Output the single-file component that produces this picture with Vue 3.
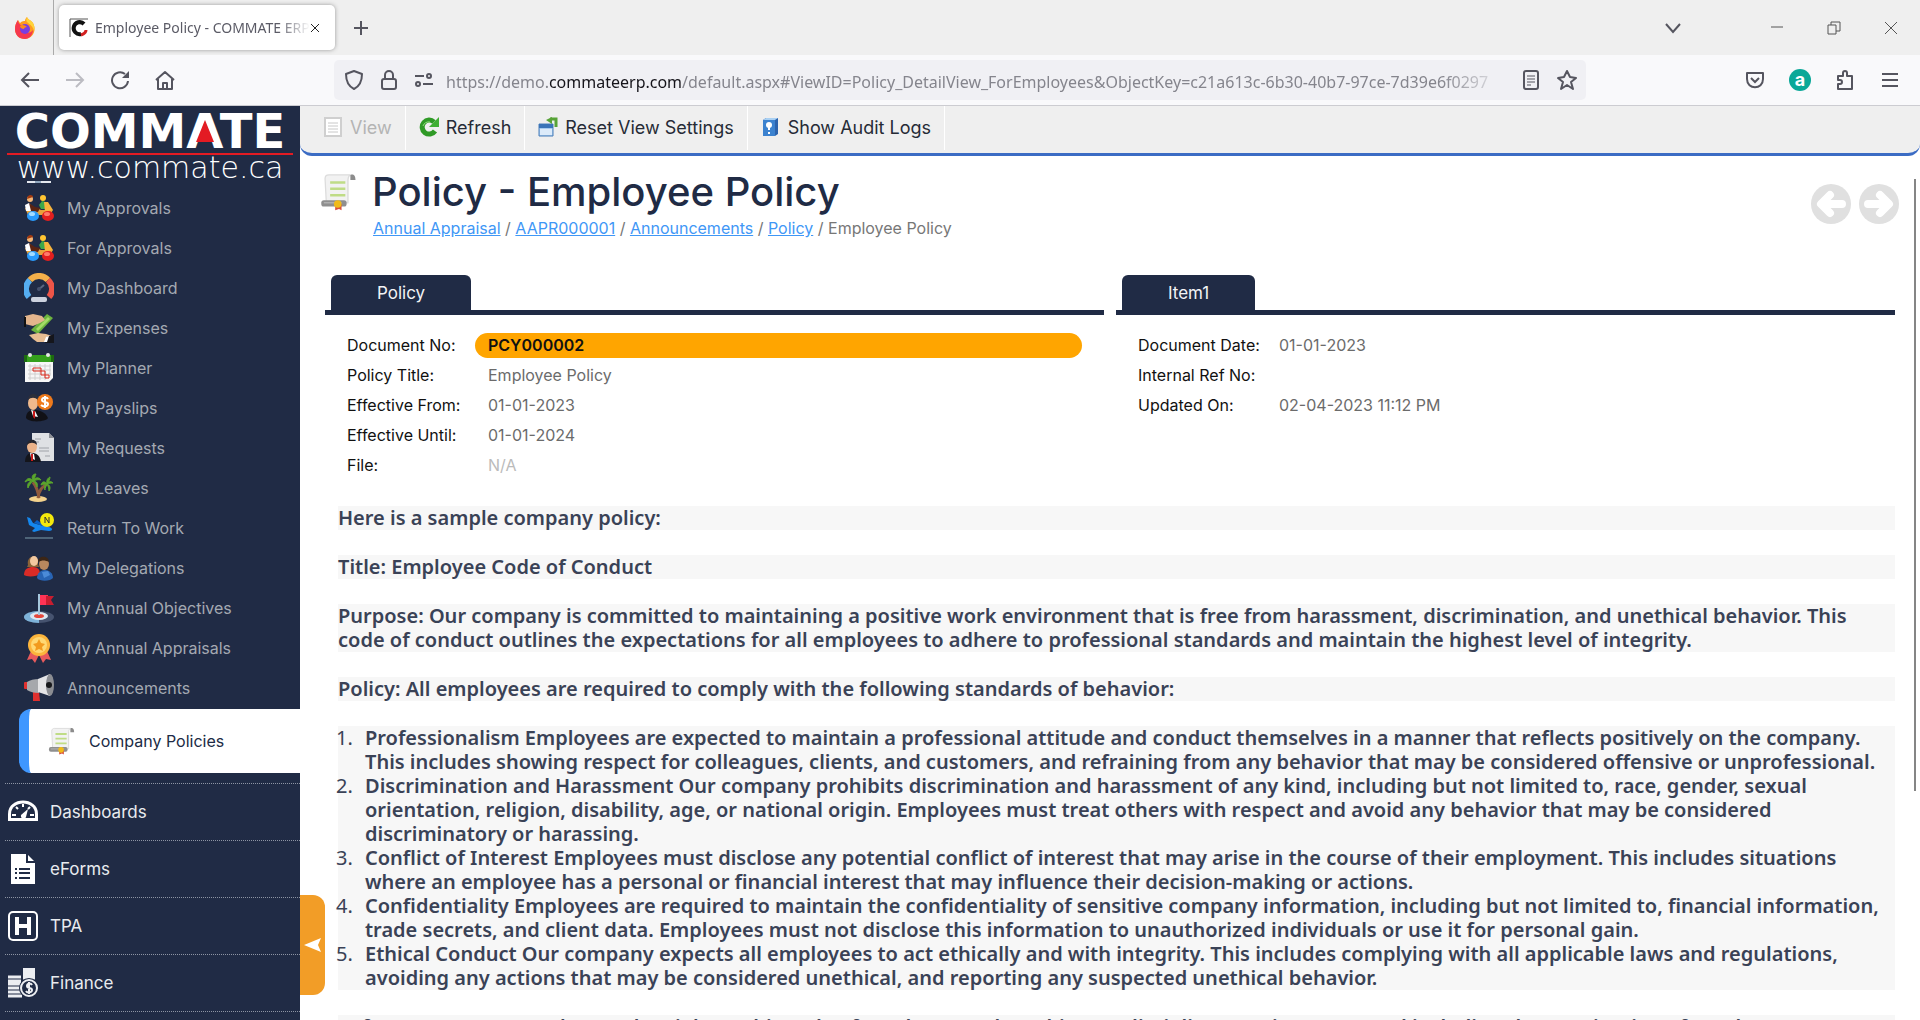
<script setup>
const approvals = `
  <path d="M1 15h12l4 2h12l-3 5H4z" fill="#e9a23a"/>
  <path d="M1 12l4-2 5 5-1 3H2z" fill="#fff"/><path d="M5 10l6 4 5 1-2 4-7-1z" fill="#5a2412"/>
  <circle cx="6" cy="6" r="3" fill="#f5b877"/><path d="M3 6c0-5 6-5 6-2z" fill="#a33a10"/>
  <circle cx="19" cy="5" r="3" fill="#ffc531"/><path d="M15 12l3-4 4 1 3 7h-8z" fill="#3da84a"/><path d="M20 9h4l5 8-8 2z" fill="#f7b43c"/>
  <ellipse cx="9" cy="23" rx="6" ry="5" fill="#2a9bfb"/><ellipse cx="8" cy="21" rx="3" ry="2" fill="#a5dcff"/>
  <ellipse cx="24" cy="23" rx="6" ry="5" fill="#e21f1f"/><ellipse cx="23" cy="21" rx="3" ry="2" fill="#ff7b6b"/>`

const scroll = `
  <path d="M6 2h17v22H6z" fill="#f4f4f4"/><path d="M4 5c0-2 1-3 3-3h17c-2 1-2 3-2 5v17H5z" fill="#f2f2f2" stroke="#dcdcdc"/>
  <path d="M24 2c2-1 4 0 4 4h-4z" fill="#8c8c8c"/>
  <path d="M8 8h12M8 13h12M8 18h12" stroke="#bfdc86" stroke-width="2"/>
  <rect x="1" y="22" width="20" height="5" rx="2" fill="#8f8f8f"/><path d="M3 24h14" stroke="#b5b5b5"/>
  <path d="M12 25h5v5l-2-1-3 1z" fill="#d8503b"/><circle cx="14" cy="25" r="3" fill="#f0bb19"/>`

const menu = [
  { label: 'My Approvals', art: approvals },
  { label: 'For Approvals', art: approvals },
  { label: 'My Dashboard', art: `
    <path d="M5 24A12 12 0 0 1 6 7" fill="none" stroke="#55aef2" stroke-width="6"/>
    <path d="M6 7a12 12 0 0 1 18 0" fill="none" stroke="#f4b04a" stroke-width="6"/>
    <path d="M24 7a12 12 0 0 1 1 17" fill="none" stroke="#ee5548" stroke-width="6"/>
    <path d="M14 17l6-5" stroke="#5b6781" stroke-width="2"/><circle cx="15" cy="16" r="2" fill="#46526d"/>
    <rect x="7" y="24" width="16" height="5" rx="2" fill="#ccd2de"/>` },
  { label: 'My Expenses', art: `
    <path d="M7 17L23 1l6 4-15 16z" fill="#6cb33f"/><path d="M12 16L24 4l2 2-12 12z" fill="#a3dc66"/>
    <path d="M1 3l8-2 9 2 3 4-5 3-7 3-8-2z" fill="#e3b58d"/><path d="M0 4h2v10H0z" fill="#111"/>
    <path d="M5 22l9-2 8 1 6 2-4 6H13l-4-3z" fill="#e8bd92"/><path d="M23 24l7-3v9h-9z" fill="#15161c"/><path d="M22 24l3-1-2 6h-3z" fill="#fff"/>` },
  { label: 'My Planner', art: `
    <path d="M1 3h28v22l-4 4H1z" fill="#f7f7f7"/><path d="M0 2h30v7H0z" fill="#35a01c"/><path d="M0 2h3v7H0zM27 2h3v7h-3z" fill="#1d6a10"/>
    <rect x="4" width="4" height="4" rx="2" fill="#e8e8e8"/><rect x="22" width="4" height="4" rx="2" fill="#e8e8e8"/>
    <path d="M4 13h23M4 17h23M4 21h23M4 25h19M6 11v16M11 11v16M16 11v16M21 11v16M26 11v12" stroke="#cfcfcf"/>
    <path d="M9 15h8v3H9zM17 18h4v4h-4zM21 22h4v3h-4z" fill="none" stroke="#dc2a1c"/>` },
  { label: 'My Payslips', art: `
    <path d="M2 25c0-6 4-8 8-8s11 1 14 8c-2 4-19 5-22 0z" fill="#111116"/><path d="M7 17l4 1 3 6-5-1z" fill="#f3f3f3"/><path d="M9 18h2v8l-2-2z" fill="#c91919"/>
    <ellipse cx="9" cy="10" rx="5" ry="7" fill="#efb98c"/><path d="M4 7c0-8 11-8 10 0-3-3-7-3-10 0z" fill="#2c2f3a"/>
    <circle cx="21" cy="9" r="8" fill="#ee7a1c"/><path d="M24 6c-1-2-6-2-6 1s6 1 6 4-5 3-7 1M21 3v12" fill="none" stroke="#fff" stroke-width="2"/>` },
  { label: 'My Requests', art: `
    <path d="M8 0h17l5 5v23H8z" fill="#dfe1e4"/><path d="M25 0l5 5h-5z" fill="#8d9096"/>
    <path d="M11 6h6M11 9h4M15 15h10M15 18h10M21 23h5" stroke="#9fa2a8"/>
    <path d="M1 29c0-6 3-9 7-9s8 2 9 9z" fill="#14151b"/><path d="M6 20l4 1 1 6-4-2z" fill="#fff"/><path d="M7 21h2v7H7z" fill="#c91919"/>
    <ellipse cx="8" cy="14" rx="5" ry="6" fill="#ecb389"/><path d="M3 12c0-7 10-7 10 0-3-3-7-3-10 0z" fill="#25262e"/>` },
  { label: 'My Leaves', art: `
    <ellipse cx="14" cy="26" rx="9" ry="3" fill="#f4d38d"/>
    <path d="M15 25C14 18 12 13 9 9M14 25c1-8 4-11 9-14" fill="none" stroke="#8f5a3c" stroke-width="3"/>
    <path d="M9 8C6 4 3 5 1 9c3-2 5-2 8-1zM9 8C4 8 3 12 4 15c1-3 3-5 5-7zM9 8C7 3 9 1 12 1c-1 2-1 4-3 7zM9 8c2-4 6-4 8-1-3-1-5 0-8 1zM9 8c4 0 5 3 4 6-1-3-2-4-4-6z" fill="#59a52c" stroke="#59a52c"/>
    <path d="M23 11c-2-3-5-3-6 1 2-1 4-1 6-1zM23 11c-3 1-3 4-2 6 0-2 1-4 2-6zM23 11c-1-4 1-6 3-7 0 2-1 4-3 7zM23 11c1-3 4-3 6-1-2 0-4 0-6 1zM23 11c3 1 4 4 2 7 0-3-1-5-2-7z" fill="#59a52c" stroke="#59a52c"/>` },
  { label: 'Return To Work', art: `
    <path d="M3 4l3 1 3 5 7 2 9 2c4 1 4 4 0 4l-8-1-7 2-2-1 3-3-6-3z" fill="#1487ee"/><path d="M10 10l3-3 9 7z" fill="#0a60c4"/>
    <circle cx="23" cy="7" r="7" fill="#f4e90c"/><path d="M21 10V4l4 6V4" fill="none" stroke="#333" stroke-width="1"/>
    <path d="M1 25h28" stroke="#7d9eac" stroke-width="1"/>` },
  { label: 'My Delegations', art: `
    <path d="M4 12C2 2 15 0 14 11l1 3H3z" fill="#8a6338"/><ellipse cx="10" cy="8" rx="4" ry="5" fill="#f2c8a0"/>
    <path d="M0 22c0-6 4-8 9-8s7 3 7 7c-3 3-14 3-16 1z" fill="#d92b27"/>
    <ellipse cx="20" cy="11" rx="5" ry="6" fill="#b8875e"/><path d="M14 9c0-7 11-7 11 0-4-2-7-2-11 0z" fill="#3c2616"/>
    <path d="M13 25c0-5 4-8 8-8s8 3 8 8c-2 3-13 4-16 0z" fill="#2864b4"/><path d="M18 19l6-1 2 4-6 3z" fill="#4b8bd8"/>` },
  { label: 'My Annual Objectives', art: `
    <ellipse cx="15" cy="24" rx="15" ry="6" fill="#46536f"/><path d="M15 18a15 6 0 0 0 0 12z" fill="#7db2d8"/>
    <ellipse cx="15" cy="23" rx="9" ry="4" fill="#dce8f2"/><ellipse cx="15" cy="23" rx="5" ry="2" fill="#e5483c"/>
    <path d="M15 1v21" stroke="#a5c7dc" stroke-width="2"/><path d="M16 2h8v10h-8z" fill="#ff3355"/><path d="M22 3h8l-3 4 3 5h-8z" fill="#c81d2f"/>` },
  { label: 'My Annual Appraisals', art: `
    <path d="M7 18L3 27l5-1 3 4 4-8 4 8 3-4 5 1-4-9z" fill="#e85a5c"/>
    <circle cx="15" cy="12" r="11" fill="#fcb53c"/><circle cx="15" cy="12" r="8" fill="#ffd873"/>
    <path d="M15 6l2 4 4 1-3 3 1 4-4-2-4 2 1-4-3-3 4-1z" fill="#f29a1e"/>` },
  { label: 'Announcements', art: `
    <path d="M9 19h6l1 9H9z" fill="#e0302f"/><rect y="9" width="5" height="7" rx="1" fill="#e0302f"/>
    <path d="M3 9c3-2 7-3 12-3v14c-5 0-9-1-12-3z" fill="#a6a8ac"/><path d="M14 6L26 1v22l-12-4z" fill="#e4e4e6"/>
    <ellipse cx="26" cy="12" rx="4" ry="11" fill="#8b8d92"/><circle cx="25" cy="12" r="3" fill="#17181b"/>` },
]

const modules = [
  { label: 'Dashboards', art: `
    <path d="M0 24V17C0-1 30-1 30 17v7z" fill="#fff"/><path d="M3 21v-4C3 3 27 3 27 17v4z" fill="#202b45"/>
    <path d="M15 7v3M8 10l2 2M22 10l-2 2M4 18h4M22 18h4" stroke="#fff" stroke-width="2"/><path d="M13 18l7-6-2 8c-1 3-6 2-5-2z" fill="#fff"/>` },
  { label: 'eForms', art: `
    <path d="M3 0h15v9h9v21H3z" fill="#fff"/><path d="M20 1l6 6h-6z" fill="#fff"/>
    <path d="M7 15h2M7 19h2M7 24h2M11 15h11M11 19h11M11 24h11" stroke="#202b45" stroke-width="2"/>` },
  { label: 'TPA', art: `
    <rect x="1" y="1" width="28" height="28" rx="4" fill="none" stroke="#fff" stroke-width="2"/>
    <path d="M9 6v18M21 6v18M9 15h12" stroke="#fff" stroke-width="4"/>` },
  { label: 'Finance', art: `
    <path d="M15 1h12M15 4h12M15 7h12M15 10h12M0 9h13M0 13h13M0 16h13M0 20h13M0 24h13M0 28h14" stroke="#eceef2" stroke-width="3"/>
    <circle cx="21" cy="20" r="10" fill="#202b45"/><circle cx="21" cy="20" r="8" fill="none" stroke="#eceef2" stroke-width="2"/>
    <path d="M24 17c-1-2-5-2-5 1s5 1 5 4-5 3-6 1M21 14v12" fill="none" stroke="#eceef2" stroke-width="2"/>` },
]

const tools = [
  { label: 'View', disabled: true, art: `<path d="M2 1h16v18H2z" fill="#fff" stroke="#cfcfcf" stroke-width="2"/><path d="M5 6h10M5 9h10M5 12h10M5 15h10" stroke="#c8c8c8"/>` },
  { label: 'Refresh', art: `<path d="M16 14a7 7 0 1 1-1-9" fill="none" stroke="#2f9a26" stroke-width="5"/><path d="M20 0v10H10z" fill="#3fae33"/><path d="M4 9a6 6 0 0 1 7-4" fill="none" stroke="#8edb7c" stroke-width="1"/>` },
  { label: 'Reset View Settings', art: `<path d="M1 7h14v12H1z" fill="#a8cbee" stroke="#4a7fb9"/><path d="M1 7h14v4H1z" fill="#3a74b8"/><path d="M2 12h12v6H2z" fill="#dcebfa"/><path d="M12 2h6v8" fill="none" stroke="#57a337" stroke-width="3"/><path d="M14 0v7L8 3z" fill="#57a337"/>` },
  { label: 'Show Audit Logs', art: `<path d="M2 3l3-2h12v16l-3 2H2z" fill="#2c63ad"/><path d="M2 3h12v16H2z" fill="#3c82cf"/><path d="M5 1h12l-3 2H2z" fill="#a9d0f3"/><circle cx="8" cy="8" r="3" fill="#fff"/><path d="M7 10h2v3H7zM7 15h2v2H7z" fill="#fff"/>` },
]

const crumbs = ['Annual Appraisal', 'AAPR000001', 'Announcements', 'Policy']

const groups = [
  { title: 'Policy', rows: [
    { label: 'Document No:', value: 'PCY000002', kind: 'key' },
    { label: 'Policy Title:', value: 'Employee Policy' },
    { label: 'Effective From:', value: '01-01-2023' },
    { label: 'Effective Until:', value: '01-01-2024' },
    { label: 'File:', value: 'N/A', kind: 'empty' },
  ] },
  { title: 'Item1', rows: [
    { label: 'Document Date:', value: '01-01-2023' },
    { label: 'Internal Ref No:', value: '' },
    { label: 'Updated On:', value: '02-04-2023 11:12 PM' },
  ] },
]

const intro = [
  'Here is a sample company policy:',
  'Title: Employee Code of Conduct',
  'Purpose: Our company is committed to maintaining a positive work environment that is free from harassment, discrimination, and unethical behavior. This code of conduct outlines the expectations for all employees to adhere to professional standards and maintain the highest level of integrity.',
  'Policy: All employees are required to comply with the following standards of behavior:',
]

const standards = [
  'Professionalism Employees are expected to maintain a professional attitude and conduct themselves in a manner that reflects positively on the company. This includes showing respect for colleagues, clients, and customers, and refraining from any behavior that may be considered offensive or unprofessional.',
  'Discrimination and Harassment Our company prohibits discrimination and harassment of any kind, including but not limited to, race, gender, sexual orientation, religion, disability, age, or national origin. Employees must treat others with respect and avoid any behavior that may be considered discriminatory or harassing.',
  'Conflict of Interest Employees must disclose any potential conflict of interest that may arise in the course of their employment. This includes situations where an employee has a personal or financial interest that may influence their decision-making or actions.',
  'Confidentiality Employees are required to maintain the confidentiality of sensitive company information, including but not limited to, financial information, trade secrets, and client data. Employees must not disclose this information to unauthorized individuals or use it for personal gain.',
  'Ethical Conduct Our company expects all employees to act ethically and with integrity. This includes complying with all applicable laws and regulations, avoiding any actions that may be considered unethical, and reporting any suspected unethical behavior.',
]

const closing = 'Enforcement: Any employee who violates this code of conduct may be subject to disciplinary action, up to and including the termination of employment.'
</script>

<template>
  <div class="browser">
    <header class="tabstrip">
      <button class="firefox" aria-label="Firefox View">
        <svg width="22" height="22" viewBox="0 0 22 22">
          <path d="M1 12C1 7 3 5 4 3l2 3c2-2 4-2 5-2 0-2 1-3 2-4 1 3 4 3 6 6 4 7 0 16-8 16C5 22 1 18 1 12z" fill="#ff9a1f" />
          <path d="M1 12c0-4 1-6 3-9 0 4 3 4 4 7 1 8 8 7 11 3 0 5-4 9-8 9C5 22 1 18 1 12z" fill="#f5384f" />
          <circle cx="11" cy="12" r="5" fill="#7a3de0" />
          <path d="M6 9c2-2 5-1 7 1-2 0-3 1-3 2-2 0-4-1-4-3z" fill="#ff8a1a" />
          <path d="M13 0c1 3 4 3 6 6 1 2 2 5 1 8-1-5-4-6-7-9-1-1-1-3 0-5z" fill="#ffd43a" />
        </svg>
      </button>
      <div class="tab">
        <svg width="20" height="20" viewBox="0 0 20 20">
          <path d="M1 19V1h18" fill="none" stroke="#555" />
          <path d="M15 6a6 6 0 1 0-3 10" fill="none" stroke="#111" stroke-width="4" />
          <path d="M12 17c3-1 5-2 5-5" fill="none" stroke="#d32020" stroke-width="3" />
        </svg>
        <span class="tab-title">Employee Policy - COMMATE ERP</span>
        <button aria-label="Close tab">
          <svg width="10" height="10" viewBox="0 0 10 10"><path d="M1 1l8 8M9 1L1 9" stroke="#222" stroke-width="1" /></svg>
        </button>
      </div>
      <button class="new-tab" aria-label="New tab">
        <svg width="16" height="16" viewBox="0 0 16 16"><path d="M8 1v14M1 8h14" stroke="#55555f" stroke-width="2" /></svg>
      </button>
      <div class="window-controls">
        <button aria-label="List all tabs"><svg width="16" height="16" viewBox="0 0 16 16"><path d="M1 4l7 8 7-8" fill="none" stroke="#55555f" stroke-width="2" /></svg></button>
        <button aria-label="Minimize"><svg width="14" height="14" viewBox="0 0 14 14"><path d="M1 6h12" stroke="#555" /></svg></button>
        <button aria-label="Restore"><svg width="14" height="14" viewBox="0 0 14 14"><path d="M1 4h8v9H1zM4 4V1h9v9H9" fill="none" stroke="#555" /></svg></button>
        <button aria-label="Close"><svg width="14" height="14" viewBox="0 0 14 14"><path d="M1 1l12 12M13 1L1 13" stroke="#555" /></svg></button>
      </div>
    </header>

    <nav class="navbar" aria-label="Browser">
      <div class="nav-buttons">
        <button aria-label="Back"><svg width="20" height="20" viewBox="0 0 20 20"><path d="M19 10H2M9 3l-7 7 7 7" fill="none" stroke="#55555f" stroke-width="2" /></svg></button>
        <button aria-label="Forward" disabled><svg width="20" height="20" viewBox="0 0 20 20"><path d="M1 10h17M11 3l7 7-7 7" fill="none" stroke="#bcbcc2" stroke-width="2" /></svg></button>
        <button aria-label="Reload"><svg width="20" height="20" viewBox="0 0 20 20"><path d="M18 11a8 8 0 1 1-3-7" fill="none" stroke="#55555f" stroke-width="2" /><path d="M19 1v7h-7z" fill="#55555f" /></svg></button>
        <button aria-label="Home"><svg width="20" height="20" viewBox="0 0 20 20"><path d="M1 10l9-8 9 8M3 9v10h14V9M8 19v-6h4v6" fill="none" stroke="#55555f" stroke-width="2" stroke-linejoin="round" /></svg></button>
      </div>
      <div class="urlbar">
        <svg width="20" height="22" viewBox="0 0 20 22"><path d="M10 2l8 3c0 7-2 12-8 15C4 17 2 12 2 5z" fill="none" stroke="#55555f" stroke-width="2" stroke-linejoin="round" /></svg>
        <svg width="20" height="22" viewBox="0 0 20 22"><rect x="3" y="10" width="14" height="10" rx="2" fill="none" stroke="#55555f" stroke-width="2" /><path d="M6 10V6a4 4 0 0 1 8 0v4" fill="none" stroke="#55555f" stroke-width="2" /></svg>
        <svg width="20" height="22" viewBox="0 0 20 22"><path d="M1 7h9M9 15h10" stroke="#55555f" stroke-width="2" /><circle cx="15" cy="7" r="2" fill="none" stroke="#55555f" stroke-width="2" /><circle cx="4" cy="15" r="2" fill="none" stroke="#55555f" stroke-width="2" /></svg>
        <div class="url" role="textbox" aria-label="Address">https://demo.<b>commateerp.com</b>/default.aspx#ViewID=Policy_DetailView_ForEmployees&amp;ObjectKey=c21a613c-6b30-40b7-97ce-7d39e6f0297</div>
        <button aria-label="Reader view"><svg width="20" height="20" viewBox="0 0 20 20"><rect x="3" y="1" width="14" height="18" rx="2" fill="none" stroke="#55555f" stroke-width="2" /><path d="M6 6h8M6 9h8M6 12h8M6 15h4" stroke="#55555f" /></svg></button>
        <button aria-label="Bookmark"><svg width="22" height="22" viewBox="0 0 22 22"><path d="M11 2l3 6 6 1-5 4 2 7-6-4-6 4 2-7-5-4 6-1z" fill="none" stroke="#55555f" stroke-width="2" stroke-linejoin="round" /></svg></button>
      </div>
      <div class="nav-extras">
        <button aria-label="Pocket"><svg width="20" height="20" viewBox="0 0 20 20"><path d="M2 3h16v6c0 11-16 11-16 0z" fill="none" stroke="#55555f" stroke-width="2" stroke-linejoin="round" /><path d="M6 8l4 4 4-4" fill="none" stroke="#55555f" stroke-width="2" /></svg></button>
        <button class="addon" aria-label="Add-on">a</button>
        <button aria-label="Extensions"><svg width="20" height="20" viewBox="0 0 20 20"><path d="M3 6h5V3a2 2 0 0 1 4 0v3h5v13H3v-5h2a2 2 0 0 0 0-4H3z" fill="none" stroke="#55555f" stroke-width="2" stroke-linejoin="round" /></svg></button>
        <button aria-label="Menu"><svg width="20" height="20" viewBox="0 0 20 20"><path d="M2 4h16M2 10h16M2 16h16" stroke="#55555f" stroke-width="2" /></svg></button>
      </div>
    </nav>

    <div class="page">
      <aside class="sidebar">
        <div class="brand">
          <div class="brand-name">COMMATE<svg width="18" height="22" viewBox="0 0 18 22"><path d="M9 0l9 22H0z" fill="#e31b23" /></svg></div>
          <div class="brand-site">www.commate.ca</div>
        </div>
        <svg class="peek" width="24" height="8" viewBox="0 0 24 8"><path d="M0 2h24" stroke="#e4e7ee" stroke-width="2" /><path d="M8 2h6" stroke="#8fa6bd" stroke-width="2" /></svg>
        <a v-for="item in menu" :key="item.label" class="menu-item" href="#">
          <svg width="30" height="30" viewBox="0 0 30 30" v-html="item.art" />{{ item.label }}
        </a>
        <a class="menu-item current" href="#" aria-current="page">
          <svg width="28" height="30" viewBox="0 0 30 31" v-html="scroll" />Company Policies
        </a>
        <a v-for="item in modules" :key="item.label" class="module" href="#">
          <svg width="30" height="30" viewBox="0 0 30 30" v-html="item.art" />{{ item.label }}
        </a>
        <div class="module-end"></div>
      </aside>

      <main class="content">
        <button class="collapse" aria-label="Collapse menu">
          <svg width="18" height="16" viewBox="0 0 18 16"><path d="M0 8l17-7-3 7 3 7z" fill="#fff" /></svg>
        </button>
        <div class="toolbar">
          <button v-for="t in tools" :key="t.label" class="tool" :disabled="t.disabled">
            <svg width="20" height="20" viewBox="0 0 20 20" v-html="t.art" />{{ t.label }}
          </button>
        </div>

        <div class="view">
          <div class="heading">
            <svg width="38" height="40" viewBox="0 0 30 31" v-html="scroll" />
            <div class="heading-text">
              <h1>Policy - Employee Policy</h1>
              <div class="crumbs">
                <template v-for="c in crumbs" :key="c"><a href="#">{{ c }}</a> / </template>Employee Policy
              </div>
            </div>
            <div class="record-nav">
              <button aria-label="Previous record" disabled>
                <svg width="40" height="40" viewBox="0 0 40 40"><circle cx="20" cy="20" r="20" fill="#e0e0e0" /><path d="M19 11l-9 9 9 9M11 20h20" fill="none" stroke="#fff" stroke-width="8" stroke-linecap="round" stroke-linejoin="round" /><path d="M11 20l8-7v14z" fill="#fff" /></svg>
              </button>
              <button aria-label="Next record" disabled>
                <svg width="40" height="40" viewBox="0 0 40 40"><circle cx="20" cy="20" r="20" fill="#e0e0e0" /><path d="M21 11l9 9-9 9M29 20H9" fill="none" stroke="#fff" stroke-width="8" stroke-linecap="round" stroke-linejoin="round" /><path d="M29 20l-8-7v14z" fill="#fff" /></svg>
              </button>
            </div>
          </div>

          <div class="groups">
            <section v-for="g in groups" :key="g.title" class="group">
              <h2>{{ g.title }}</h2>
              <dl>
                <div v-for="r in g.rows" :key="r.label" class="field">
                  <dt>{{ r.label }}</dt>
                  <dd :class="r.kind">{{ r.value }}</dd>
                </div>
              </dl>
            </section>
          </div>

          <article class="policy">
            <p v-for="p in intro" :key="p">{{ p }}</p>
            <ol>
              <li v-for="s in standards" :key="s">{{ s }}</li>
            </ol>
            <p>{{ closing }}</p>
          </article>
        </div>
        <div class="scroll-thumb"></div>
      </main>
    </div>
  </div>
</template>

<style>
body { margin: 0; background: #fff; }
</style>

<style scoped>
.browser { display: flex; flex-direction: column; height: 100vh; overflow: hidden; font-family: "Inter", "Liberation Sans", sans-serif; font-size: 16px; }
button { display: flex; align-items: center; justify-content: center; margin: 0; padding: 0; border: 0; background: none; font: inherit; color: inherit; }
svg { flex: none; display: block; }

.tabstrip { display: flex; align-items: center; flex: none; height: 55px; background: #efefef; }
.firefox { width: 54px; height: 55px; padding-right: 4px; box-sizing: border-box; border-right: 1px solid #aaa; }
.tab { display: flex; align-items: center; width: 276px; height: 45px; margin-left: 5px; padding: 0 15px 0 10px; box-sizing: border-box; border-radius: 5px; background: #fff; box-shadow: 0 0 4px #999; font-family: "Noto Sans", sans-serif; font-size: 14px; color: #5b5b66; }
.tab-title { flex: 1; margin-left: 6px; overflow: hidden; white-space: nowrap; mask-image: linear-gradient(to left, transparent, #000 32px); }
.new-tab { margin-left: 18px; }
.window-controls { display: flex; gap: 43px; margin-left: auto; padding-right: 22px; }
.window-controls button:first-child { margin-right: 46px; }

.navbar { display: flex; align-items: center; flex: none; height: 51px; box-sizing: border-box; border-bottom: 1px solid #ccccd1; background: #f9f9fb; }
.nav-buttons { display: flex; gap: 25px; width: 334px; padding-left: 20px; box-sizing: border-box; }
.urlbar { display: flex; align-items: center; flex: 1; min-width: 0; gap: 15px; height: 40px; padding: 0 8px 0 10px; border-radius: 5px; background: #f0f0f4; }
.url { flex: 1; min-width: 0; margin-left: -3px; padding-top: 3px; overflow: hidden; white-space: nowrap; font-family: "Noto Sans", sans-serif; font-size: 16px; color: #85858d; mask-image: linear-gradient(to left, transparent, #000 64px); }
.url b { font-weight: 400; color: #15141a; }
.nav-extras { display: flex; gap: 25px; padding: 0 20px 0 159px; }
.addon { width: 20px; height: 20px; border-radius: 50%; background: #0ba898; font-size: 18px; line-height: 16px; font-weight: 700; color: #fff; box-shadow: 0 0 0 1px #0ba898; }

.page { display: flex; flex: 1; min-height: 0; }
.sidebar { display: flex; flex-direction: column; flex: none; width: 300px; overflow: hidden; background: #202b45; }
.sidebar > * { flex: none; }
.brand { height: 74px; padding: 0 7px; color: #fff; font-family: "DejaVu Sans", sans-serif; text-align: center; white-space: nowrap; }
.brand-name { position: relative; height: 47px; border-bottom: 2px solid #e31b23; font-size: 48px; font-weight: 700; line-height: 50px; }
.brand-name svg { position: absolute; left: 189px; top: 14px; }
.brand-site { font-size: 30px; font-weight: 200; line-height: 25px; }
.peek { margin-left: 27px; }
.menu-item { display: flex; align-items: center; gap: 13px; height: 40px; padding-left: 24px; color: #a4a9b2; text-decoration: none; }
.current { gap: 13px; height: 64px; margin: 1px 0 10px 19px; padding-left: 19px; border-left: 10px solid #3f97ff; border-radius: 12px 0 0 12px; background: #fff; color: #202b45; }
.module { display: flex; align-items: center; gap: 12px; height: 56px; margin-left: 5px; padding-left: 3px; border-top: 1px dotted #8d94a3; font-size: 17px; color: #e9ebef; text-decoration: none; }
.module-end { height: 10px; margin-left: 5px; border-top: 1px dotted #8d94a3; }

.content { position: relative; display: flex; flex-direction: column; flex: 1; min-width: 0; overflow: hidden; background: #fff; }
.collapse { position: absolute; left: 0; bottom: 25px; width: 25px; height: 100px; border-radius: 0 12px 12px 0; background: #f29d27; }
.toolbar { display: flex; flex: none; height: 47px; padding: 0 0 0 10px; border-bottom: 3px solid #3b6cc4; border-radius: 0 0 12px 12px; background: #efefef; }
.tool { gap: 7px; height: 44px; padding: 0 13px 2px; border-right: 1px solid #fff; font-size: 18px; color: #262b36; }
.tool:disabled { color: #b4b4b4; }
.view { padding: 16px 25px 0; }
.heading { display: flex; align-items: flex-start; margin-left: -5px; margin-right: -4px; }
.heading-text { flex: 1; margin-left: 14px; }
h1 { margin: 0; font-size: 40px; line-height: 40px; font-weight: 500; color: #202b45; }
.crumbs { margin-top: 6px; padding-left: 1px; line-height: 20px; color: #777; }
.crumbs a { color: #3f97f6; }
.record-nav { display: flex; gap: 8px; padding-top: 12px; }
.groups { display: flex; gap: 12px; margin-top: 37px; }
.group { flex: 1; }
h2 { display: inline-block; height: 35px; margin: 0 0 0 6px; padding: 0 46px; border-radius: 6px 6px 0 0; background: #202b45; font-size: 17px; line-height: 36px; font-weight: 400; vertical-align: top; color: #f2f3f5; }
dl { margin: 0; padding: 15px 22px 0; border-top: 5px solid #202b45; }
.field { display: flex; align-items: center; height: 30px; }
dt { width: 128px; color: #111; }
dd { flex: 1; margin: 0; padding-left: 13px; line-height: 25px; color: #6b6b6b; }
.key { border-radius: 13px; background: #ffa500; font-weight: 600; color: #111; }
.empty { color: #bbb; }
.policy { margin: 26px 0 0 13px; font-family: "Noto Sans", "Liberation Sans", sans-serif; font-size: 20px; line-height: 24px; font-weight: 600; color: #3a4256; }
.policy p, .policy ol { margin: 0 0 25px; background: #f7f7f7; }
.policy ol { padding-left: 20px; }
.policy li { padding-left: 7px; }
.policy li::marker { font-weight: 400; }
.scroll-thumb { position: absolute; right: 4px; top: 73px; width: 2px; height: 67%; background: #858585; }
</style>
